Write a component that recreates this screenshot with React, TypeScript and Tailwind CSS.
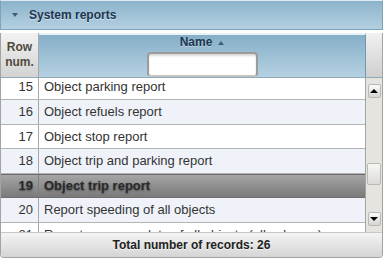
import { useState } from "react";

const rows = [
  { n: 15, name: "Object parking report" },
  { n: 16, name: "Object refuels report" },
  { n: 17, name: "Object stop report" },
  { n: 18, name: "Object trip and parking report" },
  { n: 19, name: "Object trip report" },
  { n: 20, name: "Report speeding of all objects" },
  { n: 21, name: "Report summary data of all objects (all columns)" },
];

export default function App() {
  const [selected] = useState(19);
  const [filter, setFilter] = useState("");

  return (
    <div className="w-[383px] h-[258px] bg-white overflow-hidden font-['Liberation_Sans',Arial,sans-serif]">
      {/* Panel title */}
      <div className="h-[30px] flex items-center border border-[#7da2ba] border-t-[#dfeaf1] bg-gradient-to-b from-[#8cb3cb] to-[#b4d0e1]">
        <span className="ml-[11px] w-0 h-0 border-l-[3px] border-r-[3px] border-t-[4px] border-l-transparent border-r-transparent border-t-[#3e6079]" />
        <span className="ml-[11px] text-[12px] font-bold text-[#1c3650] [text-shadow:0_1px_0_rgba(255,255,255,0.45)]">
          System reports
        </span>
      </div>

      {/* Grid */}
      <div className="mt-[3px] h-[225px] flex flex-col border-l border-r border-b border-[#a3a3a3] rounded-b-[4px] overflow-hidden">
        {/* Header */}
        <div className="h-[44px] flex shrink-0">
          <div className="w-[38px] border-r border-[#a8a8a8] bg-gradient-to-b from-[#f2f2f2] to-[#d3d3d3] flex items-center justify-center text-center text-[12px] font-bold leading-[15px] text-[#4f4a3e]">
            Row
            <br />
            num.
          </div>
          <div className="flex-1 border-t-2 border-[#e9f2f7] border-r border-r-[#6f98b1] bg-gradient-to-b from-[#86afc8] to-[#b5d1e2] flex flex-col items-center">
            <div className="h-[15px] leading-[15px] flex items-center gap-[6px] text-[12px] font-bold text-[#1c3650] [text-shadow:0_1px_0_rgba(255,255,255,0.4)]">
              Name
              <span className="w-0 h-0 border-l-[3px] border-r-[3px] border-b-[4px] border-l-transparent border-r-transparent border-b-[#3e6079]" />
            </div>
            <input
              value={filter}
              onChange={(e) => setFilter(e.target.value)}
              className="mt-[2px] w-[111px] h-[25px] shrink-0 bg-white border-2 border-[#9c9c9c] border-b-[#c4c4c4] rounded-[4px] shadow-[inset_0_2px_2px_rgba(0,0,0,0.15)] outline-none px-1 text-[12px]"
            />
          </div>
          <div className="w-[16px] bg-gradient-to-b from-[#f1f1f1] to-[#cfcfcf]" />
        </div>

        {/* Body */}
        <div className="h-[155px] flex shrink-0 border-t border-[#8fa9b9]">
          <div className="flex-1 overflow-hidden border-r border-[#a3a3a3]">
            <div className="mt-[-2.6px]">
              {rows.map((r, i) => {
                const isSel = r.n === selected;
                return (
                  <div
                    key={r.n}
                    className={`h-[24.6px] flex items-center text-[13px] border-b ${
                      isSel
                        ? "bg-gradient-to-b from-[#a6a6a6] to-[#7a7a7a] border-[#707070] border-t border-t-[#6a6a6a] font-bold text-[#2a2a2a] [text-shadow:0_1px_2px_rgba(0,0,0,0.45)]"
                        : i % 2 === 1
                        ? "bg-[#eff3f9] border-[#b4b4b4] text-[#333]"
                        : "bg-white border-[#b4b4b4] text-[#333]"
                    }`}
                  >
                    <div className={`w-[38px] h-full flex items-center justify-end pr-[5px] border-r ${isSel ? "border-[#808080]" : "border-[#a8a8a8]"}`}>
                      {r.n}
                    </div>
                    <div className="pl-[5px] whitespace-nowrap">{r.name}</div>
                  </div>
                );
              })}
            </div>
          </div>
          {/* Scrollbar */}
          <div className="w-[16px] bg-[#e6e4df] flex flex-col items-center py-[6px]">
            <div className="w-[13px] h-[14px] border border-[#b9b8b3] rounded-[2px] bg-gradient-to-b from-[#fbfbfb] to-[#d6d5d0] flex items-center justify-center">
              <span className="w-0 h-0 border-l-[4px] border-r-[4px] border-b-[4px] border-l-transparent border-r-transparent border-b-black" />
            </div>
            <div className="mt-[65px] w-[14px] h-[22px] border border-[#b9b8b3] rounded-[2px] bg-gradient-to-b from-[#f7f7f5] to-[#dcdbd6]" />
            <div className="mt-auto w-[13px] h-[14px] border border-[#b9b8b3] rounded-[2px] bg-gradient-to-b from-[#fbfbfb] to-[#d6d5d0] flex items-center justify-center">
              <span className="w-0 h-0 border-l-[4px] border-r-[4px] border-t-[4px] border-l-transparent border-r-transparent border-t-black" />
            </div>
          </div>
        </div>

        {/* Footer */}
        <div className="flex-1 border-t border-[#c8c8c8] bg-gradient-to-b from-[#f4f4f4] to-[#d5d5d5] flex items-center justify-center text-[12px] font-bold text-[#222] [text-shadow:0_1px_0_rgba(255,255,255,0.6)]">
          Total number of records: 26
        </div>
      </div>
    </div>
  );
}
